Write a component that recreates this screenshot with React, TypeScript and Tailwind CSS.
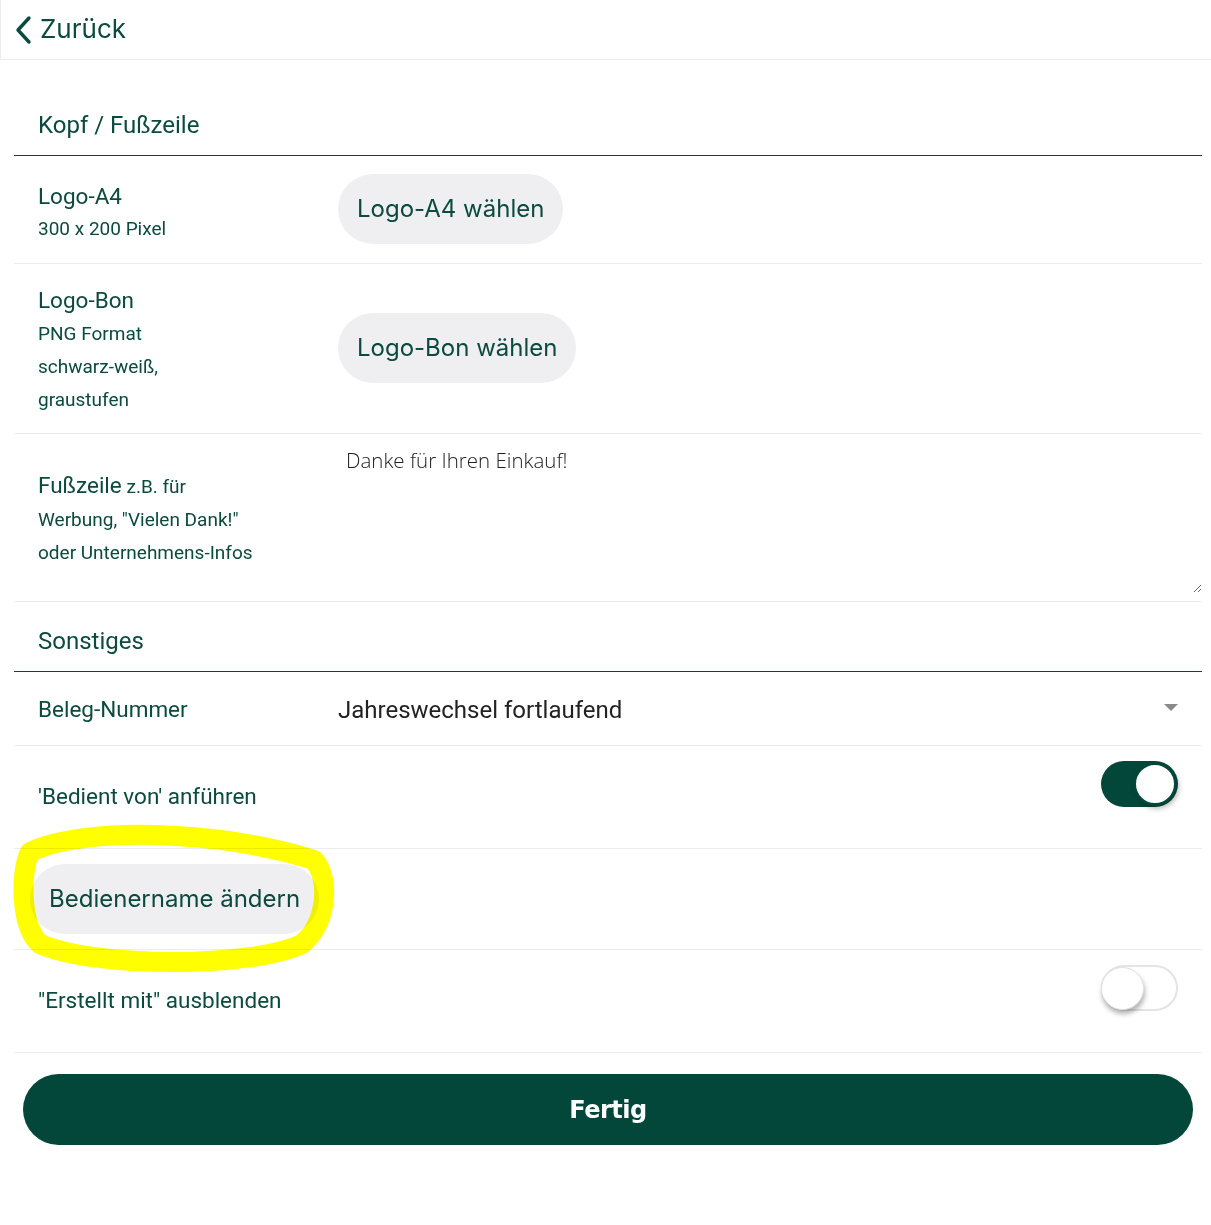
import React from 'react';

const roboto = { fontFamily: 'Roboto, "Liberation Sans", sans-serif' };
const inter = { fontFamily: 'Inter, "Liberation Sans", sans-serif' };

function PillButton({ children }: { children: React.ReactNode }) {
  return (
    <button
      type="button"
      style={inter}
      className="h-[70px] px-[19px] rounded-full bg-[#efeff1] text-[24px] tracking-[0px] text-[#0b4a3e] whitespace-nowrap"
    >
      {children}
    </button>
  );
}

function Toggle({ on }: { on: boolean }) {
  return on ? (
    <div className="w-[77px] h-[46px] rounded-full bg-[#03473b] flex items-center justify-end pr-[1px]">
      <div className="w-[44px] h-[44px] rounded-full bg-white border-[3px] border-[#03473b] shadow-[2px_3px_5px_rgba(0,0,0,0.25)]" />
    </div>
  ) : (
    <div className="w-[77px] h-[46px] rounded-full bg-white border-2 border-[#e4e4e4] flex items-center justify-start">
      <div className="w-[43px] h-[43px] -ml-[2px] rounded-full bg-white border border-[#e2e2e2] shadow-[1px_4px_5px_rgba(0,0,0,0.3)]" />
    </div>
  );
}

function SectionTitle({ title, tall }: { title: string; tall?: boolean }) {
  return (
    <div
      className={`${tall ? 'h-[96px]' : 'h-[70px]'} flex items-end pb-[16px] pl-[24px] border-b border-[#1d3b36]`}
    >
      <span style={roboto} className="text-[24px] leading-[28px] text-[#0b4a3e]">{title}</span>
    </div>
  );
}

export default function App() {
  return (
    <div className="min-h-[1225px] bg-white text-[#0b4a3e] relative">
      {/* Header */}
      <div className="h-[60px] border-b border-l border-[#ececec] flex items-center pl-[12px] gap-[7px]">
        <svg width="20" height="30" viewBox="0 0 20 30" fill="none">
          <path d="M16 3 L5 15 L16 27" stroke="#0b4a3e" strokeWidth="3.4" strokeLinecap="round" strokeLinejoin="round" />
        </svg>
        <span style={inter} className="text-[26px] -mt-[2px] text-[#0b4a3e]">Zurück</span>
      </div>

      <div className="ml-[14px] mr-[9px]">
        <SectionTitle title="Kopf / Fußzeile" tall />

        {/* Logo-A4 */}
        <div className="h-[108px] flex items-center border-b border-[#ececec]">
          <div style={roboto} className="w-[324px] pl-[24px] pt-[8px]">
            <div className="text-[22.5px] leading-[30px]">Logo-A4</div>
            <div className="text-[19px] leading-[36px]">300 x 200 Pixel</div>
          </div>
          <div className="-mt-[1px]">
            <PillButton>Logo-A4 wählen</PillButton>
          </div>
        </div>

        {/* Logo-Bon */}
        <div className="h-[170px] flex items-center border-b border-[#ececec]">
          <div style={roboto} className="w-[324px] pl-[24px] pt-[2px]">
            <div className="text-[22.5px] leading-[34px]">Logo-Bon</div>
            <div className="text-[19px] leading-[33px]">PNG Format</div>
            <div className="text-[19px] leading-[33px]">schwarz-weiß,</div>
            <div className="text-[19px] leading-[33px]">graustufen</div>
          </div>
          <div className="-mt-[1px]">
            <PillButton>Logo-Bon wählen</PillButton>
          </div>
        </div>

        {/* Fußzeile */}
        <div className="h-[168px] flex items-stretch border-b border-[#ececec]">
          <div style={roboto} className="w-[324px] pl-[24px] self-center pt-[2px]">
            <div className="text-[19px] leading-[33px]">
              <span className="text-[22.5px]">Fußzeile</span> z.B. für
            </div>
            <div className="text-[19px] leading-[33px]">Werbung, "Vielen Dank!"</div>
            <div className="text-[19px] leading-[33px]">oder Unternehmens-Infos</div>
          </div>
          <textarea
            defaultValue="Danke für Ihren Einkauf!"
            style={{ fontFamily: '"Open Sans", "Liberation Sans", sans-serif' }}
            className="flex-1 mt-[11px] mb-[8px] px-[8px] py-[1px] text-[20.5px] font-light leading-[28px] text-[#222] outline-none resize-y bg-transparent"
          />
        </div>

        <SectionTitle title="Sonstiges" />

        {/* Beleg-Nummer */}
        <div className="h-[74px] flex items-center border-b border-[#ececec]">
          <div style={roboto} className="w-[324px] pl-[24px] text-[22.5px] pt-[3px]">Beleg-Nummer</div>
          <div className="flex-1 flex items-center justify-between pr-[24px]">
            <span style={roboto} className="text-[24px] text-[#222] pt-[2px]">Jahreswechsel fortlaufend</span>
            <svg width="14" height="8" viewBox="0 0 14 8" className="-mt-[2px]">
              <path d="M0 0 L14 0 L7 7 Z" fill="#8a8a8a" />
            </svg>
          </div>
        </div>

        {/* Bedient von */}
        <div className="h-[103px] flex justify-between border-b border-[#ececec] pr-[24px]">
          <div style={roboto} className="pl-[24px] text-[22.5px] self-center">'Bedient von' anführen</div>
          <div className="mt-[15px]">
            <Toggle on />
          </div>
        </div>

        {/* Bedienername */}
        <div className="h-[101px] flex items-center border-b border-[#ececec] pl-[16px]">
          <PillButton>Bedienername ändern</PillButton>
        </div>

        {/* Erstellt mit */}
        <div className="h-[103px] flex justify-between border-b border-[#ececec] pr-[24px]">
          <div style={roboto} className="pl-[24px] text-[22.5px] self-center">"Erstellt mit" ausblenden</div>
          <div className="mt-[15px]">
            <Toggle on={false} />
          </div>
        </div>

        <div className="px-[9px] pt-[21px]">
          <button
            type="button"
            style={{ fontFamily: '"DejaVu Sans", sans-serif' }}
            className="w-full h-[71px] rounded-full bg-[#03473b] text-white text-[24px] font-bold tracking-[-0.5px]"
          >
            Fertig
          </button>
        </div>
      </div>

      {/* Highlighter annotation */}
      <svg
        className="absolute left-0 top-[800px] pointer-events-none mix-blend-multiply"
        width="350"
        height="190"
        viewBox="0 800 350 190"
      >
        <path
          d="M 30 852 C 84 826, 220 830, 314 860 C 330 878, 328 922, 302 944 C 252 968, 94 968, 40 944 C 20 926, 20 872, 30 852 Z"
          fill="none"
          stroke="#ffff00"
          strokeWidth="20"
          strokeLinejoin="round"
        />
      </svg>
    </div>
  );
}
